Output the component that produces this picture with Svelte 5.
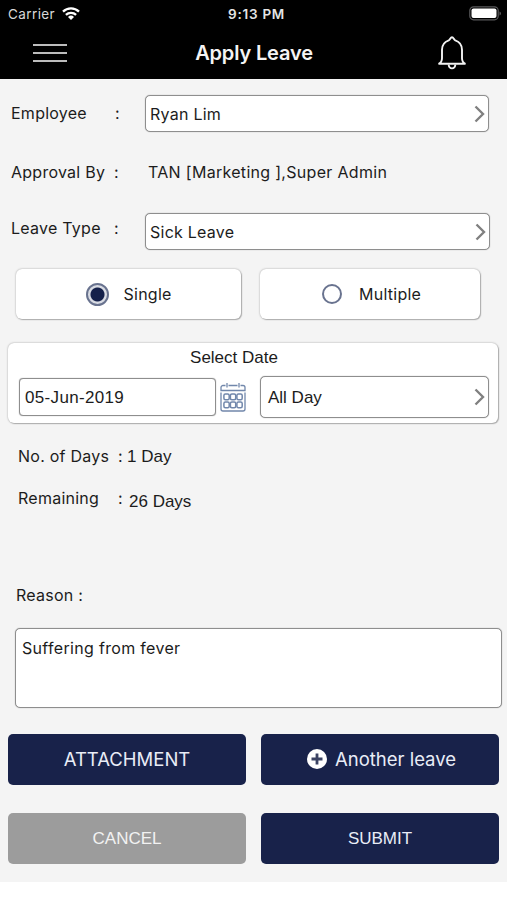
<script lang="ts">
	type Mode = 'single' | 'multiple';

	let mode = $state<Mode>('single');
	let reason = $state('Suffering from fever');
	let date = $state('05-Jun-2019');
</script>

{#snippet chevron()}
	<svg class="chevron" width="11" height="18" viewBox="0 0 11 18" aria-hidden="true">
		<path d="M1.500 1.500 9 9l-7.500 7.500" fill="none" stroke="#808080" stroke-width="2.400" />
	</svg>
{/snippet}

<div class="screen">
	<header>
		<div class="status">
			<span class="carrier">Carrier</span>
			<svg class="wifi" width="18" height="13" viewBox="0 0 18 13" aria-hidden="true">
				<g fill="none" stroke="#fff" stroke-width="2.300">
					<path d="M1 4.700a11.500 11.500 0 0 1 16 0" />
					<path d="M3.900 7.900a7.300 7.300 0 0 1 10.200 0" />
				</g>
				<path d="M6 10a4.300 4.300 0 0 1 6 0l-3 3z" fill="#fff" />
			</svg>
			<span class="time">9:13 PM</span>
			<svg class="battery" width="33" height="15" viewBox="0 0 33 15" aria-hidden="true">
				<rect x="0.800" y="0.800" width="28.400" height="13" rx="3.800" fill="none" stroke="#59595b" stroke-width="1.200" />
				<rect x="2.500" y="2.600" width="25" height="9.500" rx="2" fill="#fff" />
				<path d="M30.500 5.500v4q1.500-.6 1.500-2t-1.500-2" fill="#59595b" />
			</svg>
		</div>
		<div class="nav">
			<button class="menu" aria-label="Menu"><i></i><i></i><i></i></button>
			<h1>Apply Leave</h1>
			<button class="bell" aria-label="Notifications">
				<svg width="30" height="34" viewBox="0 0 30 34" fill="none" stroke="#f2f2f2" stroke-width="1.900">
					<path d="M1.500 27.800h27c-2.500-1-3.500-2.600-3.500-5.500v-8.600c0-4.400-2.500-7.900-6.700-9.400C16.800 3.700 16.600 1.200 15 1.200s-1.800 2.500-3.300 3.100C7.500 5.800 5 9.300 5 13.700v8.600c0 2.900-1 4.500-3.500 5.500z" />
					<path d="M11.600 28.500c.3 2.500 1.600 3.900 3.400 3.900s3.100-1.400 3.400-3.900" />
				</svg>
			</button>
		</div>
	</header>

	<main>
		<div class="row employee">
			<span class="label">Employee</span><span class="colon">:</span>
			<button class="field"><span class="ryan">Ryan Lim</span>{@render chevron()}</button>
		</div>
		<div class="row approval">
			<span class="label">Approval By</span><span class="colon">:</span>
			<span class="approver">TAN [Marketing ],Super Admin</span>
		</div>
		<div class="row type">
			<span class="label">Leave Type</span><span class="colon">:</span>
			<button class="field"><span class="sick">Sick Leave</span>{@render chevron()}</button>
		</div>

		<div class="modes" role="radiogroup">
			<button class="card single" role="radio" aria-checked={mode === 'single'} onclick={() => (mode = 'single')}>
				<span class="radio" class:on={mode === 'single'}></span><span>Single</span>
			</button>
			<button class="card multiple" role="radio" aria-checked={mode === 'multiple'} onclick={() => (mode = 'multiple')}>
				<span class="radio" class:on={mode === 'multiple'}></span><span>Multiple</span>
			</button>
		</div>

		<section class="card dates">
			<h2>Select Date</h2>
			<div class="pickers">
				<input bind:value={date} aria-label="Date" />
				<svg class="calendar" width="26" height="30" viewBox="0 0 26 30" fill="none" stroke="#7187ab" aria-hidden="true">
					<path d="M5.500 3.500H3a2 2 0 0 0-2 2v3h24v-3a2 2 0 0 0-2-2h-2.500M8.500 3.500h9M7 1v4.500M19 1v4.500" stroke-width="1.300" />
					<path d="M1 10.500V27a2 2 0 0 0 2 2h20a2 2 0 0 0 2-2V10.500" stroke-width="1.300" />
					<g stroke-width="1.500">
						{#each [12, 20] as y}
							{#each [3.900, 10.400, 16.900] as x}
								<rect {x} {y} width="5.300" height="5.800" rx="1.500" />
							{/each}
						{/each}
					</g>
				</svg>
				<button class="field"><span>All Day</span>{@render chevron()}</button>
			</div>
		</section>

		<div class="info days">
			<span class="name">No. of Days</span><span class="mark">:</span><span class="value">1 Day</span>
		</div>
		<div class="info remaining">
			<span class="name">Remaining</span><span class="mark">:</span><span class="value">26 Days</span>
		</div>

		<label for="reason">Reason :</label>
		<textarea id="reason" bind:value={reason} spellcheck="false"></textarea>

		<div class="actions">
			<button class="attach">ATTACHMENT</button>
			<button class="another">
				<svg width="20" height="20" viewBox="0 0 20 20" aria-hidden="true">
					<circle cx="10" cy="10" r="10" fill="#fff" />
					<path d="M10 4.500v11M4.500 10h11" stroke="#3b4363" stroke-width="2.800" />
				</svg>
				<span>Another leave</span>
			</button>
			<button class="cancel">CANCEL</button>
			<button class="submit">SUBMIT</button>
		</div>
	</main>
</div>

<style>
	:global(body) {
		margin: 0;
		background: #fff;
	}
	.screen {
		width: 507px;
		height: 900px;
		overflow: hidden;
		font: 16px/20px Inter, sans-serif;
		letter-spacing: 0.250px;
		color: #1c1c1c;
	}
	.screen * {
		box-sizing: border-box;
	}
	button {
		font: inherit;
		letter-spacing: inherit;
		color: inherit;
		border: 0;
		padding: 0;
		background: none;
		text-align: left;
		white-space: nowrap;
	}
	header {
		height: 79px;
		background: #000;
		color: #fff;
	}
	.status {
		display: flex;
		align-items: center;
		height: 27px;
		padding: 0 5px 0 8px;
		font-size: 13.500px;
	}
	.carrier {
		width: 54px;
		color: #d8d8d8;
		letter-spacing: 0.400px;
	}
	.time {
		margin-left: 148px;
		font-weight: 600;
		color: #e4e4e4;
		letter-spacing: 0.750px;
	}
	.battery {
		margin-left: auto;
	}
	.nav {
		display: grid;
		grid-template-columns: 1fr auto 1fr;
		align-items: center;
		height: 51px;
		padding: 0 40px 0 33px;
	}
	.menu {
		display: flex;
		flex-direction: column;
		gap: 6px;
		width: 34px;
	}
	.menu i {
		height: 2px;
		background: #bcbcbc;
	}
	h1 {
		margin: 0 -4px 0 4px;
		font-size: 20px;
		font-weight: 600;
		letter-spacing: -0.150px;
		color: #f4f4f4;
	}
	.bell {
		justify-self: end;
		height: 34px;
	}
	.bell svg {
		display: block;
	}
	main {
		height: 803px;
		padding-top: 16px;
		background: #f4f4f4;
	}
	.row {
		display: flex;
		align-items: center;
		padding-left: 11px;
	}
	.label {
		width: 103px;
	}
	.colon {
		width: 31px;
	}
	.employee .label,
	.employee .colon {
		position: relative;
		top: -1px;
	}
	.employee .colon {
		left: 1px;
	}
	.field {
		display: flex;
		align-items: center;
		justify-content: space-between;
		width: 344px;
		height: 37px;
		padding: 0 3px 0 4px;
		background: #fff;
		border: 1px solid #8e8e8e;
		border-radius: 5px;
		box-shadow: 0 0 1px #8e8e8e;
	}
	.approval {
		height: 20px;
		margin-top: 30px;
	}
	.approver {
		margin-left: 3px;
		letter-spacing: 0.300px;
	}
	.type {
		margin-top: 31px;
	}
	.type .field {
		width: 345px;
	}
	.type .label,
	.type .colon {
		position: relative;
		top: -4px;
	}
	.modes {
		display: flex;
		gap: 19px;
		margin: 19px 0 0 15.500px;
	}
	.card {
		background: #fff;
		border-radius: 6px;
		box-shadow: 0 0 2px #999, 1px 1px 1px #b5b5b5;
	}
	.modes .card {
		display: flex;
		align-items: center;
		width: 225.500px;
		height: 50px;
		padding-left: 70px;
		gap: 15px;
	}
	.modes .multiple {
		width: 220px;
		padding-left: 62px;
		gap: 17px;
	}
	.radio {
		width: 20px;
		height: 20px;
		border: 2px solid #69738f;
		border-radius: 50%;
	}
	.radio.on {
		width: 23px;
		height: 23px;
		background: radial-gradient(circle, #14204a 6.500px, #d9dce4 7.500px);
	}
	.dates {
		width: 490px;
		height: 80px;
		margin: 24px 0 0 8px;
		padding: 5px 9px 0 11px;
		font-family: 'Liberation Sans', sans-serif;
		letter-spacing: 0;
	}
	h2 {
		margin: 0;
		padding-right: 40px;
		font-size: 17px;
		font-weight: 400;
		line-height: 20px;
		text-align: center;
	}
	.pickers {
		display: flex;
		align-items: center;
		margin-top: 8px;
	}
	input {
		width: 197px;
		height: 38px;
		padding: 2px 5px 0;
		font: 17px 'Liberation Sans', sans-serif;
		letter-spacing: 0.330px;
		color: inherit;
		background: #fff;
		border: 1px solid #8e8e8e;
		border-radius: 4px;
		box-shadow: 0 0 1px #8e8e8e;
	}
	.calendar {
		margin: 0 14px 0 4px;
	}
	.pickers .field {
		width: 229px;
		height: 42px;
		padding-left: 7px;
		font-size: 17px;
	}
	.pickers .field span {
		padding-top: 2px;
	}
	.info {
		display: flex;
		align-items: center;
		height: 20px;
		padding-left: 18px;
	}
	.days {
		margin-top: 23px;
	}
	.remaining {
		margin-top: 22px;
	}
	.name {
		width: 100px;
	}
	.mark {
		width: 9px;
	}
	.value {
		position: relative;
		top: 1px;
		font: 17px/20px 'Liberation Sans', sans-serif;
		letter-spacing: 0;
	}
	.remaining .value {
		top: 4px;
		left: 2px;
	}
	label {
		display: block;
		margin: 77px 0 0 16px;
	}
	textarea {
		display: block;
		width: 487px;
		height: 80px;
		margin: 23px 0 0 15px;
		padding: 9px 6px;
		font: inherit;
		letter-spacing: 0.320px;
		color: inherit;
		background: #fff;
		border: 1px solid #8e8e8e;
		border-radius: 5px;
		box-shadow: 0 0 1px #8e8e8e;
		resize: none;
	}
	.actions {
		display: grid;
		grid-template-columns: 238px 238px;
		gap: 28px 15px;
		margin: 26px 0 0 8px;
	}
	.actions button {
		display: flex;
		align-items: center;
		justify-content: center;
		height: 51px;
		padding-bottom: 1px;
		font-size: 18.500px;
		letter-spacing: 0;
		color: #e9edf7;
		background: #18224a;
		border-radius: 5px;
	}
	.actions .another {
		gap: 8px;
		padding-left: 3px;
	}
	.actions .cancel,
	.actions .submit {
		padding-bottom: 0;
		padding-top: 1px;
		font-family: 'Liberation Sans', sans-serif;
		font-size: 17px;
	}
	.actions .cancel {
		color: #f2f2f2;
		background: #9c9c9c;
	}
</style>
